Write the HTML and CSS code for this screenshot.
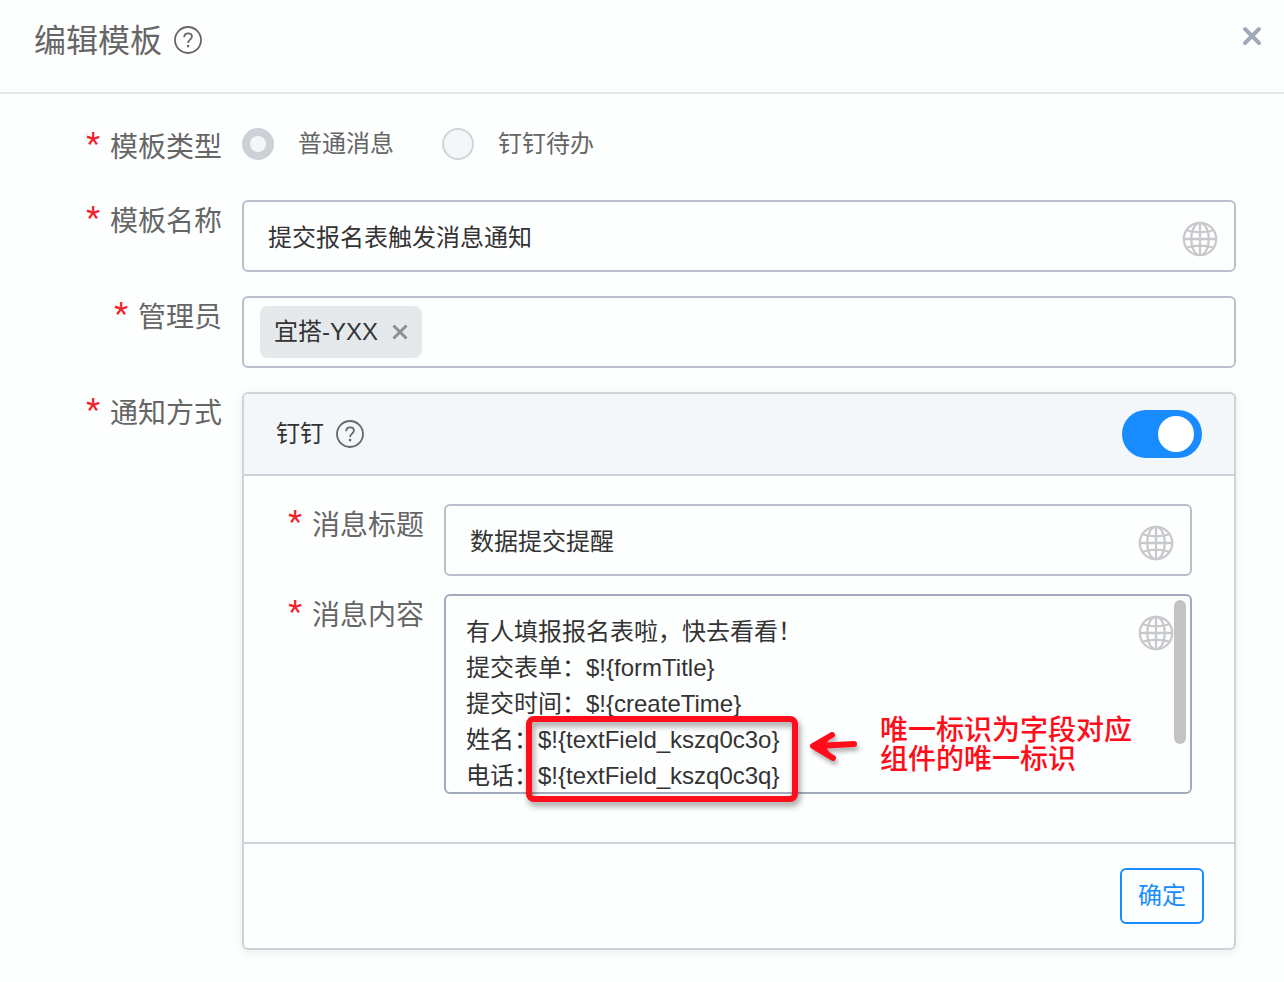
FILE: index.html
```html
<!DOCTYPE html>
<html lang="zh-CN">
<head>
    <meta charset="UTF-8">
    <meta name="viewport" content="width=device-width, initial-scale=1.0">
    <title>编辑模板</title>
    <link rel="stylesheet" href="styles.css">
</head>
<body>
    <!-- 公共图标 -->
    <svg class="sprite" aria-hidden="true">
        <symbol id="icon-help" viewBox="0 0 28 28">
            <circle cx="14" cy="14" r="13" fill="none" stroke="currentColor" stroke-width="1.8"/>
            <path d="M10.2 11.2c0-2.3 1.6-3.8 3.9-3.8 2.2 0 3.8 1.3 3.8 3.3 0 2.9-3.8 3.1-3.8 6.3" fill="none" stroke="currentColor" stroke-width="1.8"/>
            <circle cx="14.1" cy="20.1" r="1.3" fill="currentColor"/>
        </symbol>
        <symbol id="icon-globe" viewBox="0 0 36 36">
            <g fill="none" stroke="currentColor" stroke-width="2.3">
                <circle cx="18" cy="18" r="16.2"/>
                <ellipse cx="18" cy="18" rx="8.8" ry="16.2"/>
                <path d="M18 2v32M2 18h32M5 9.5c8 2.2 18 2.2 26 0M5 26.5c8-2.2 18-2.2 26 0"/>
            </g>
        </symbol>
    </svg>

    <header class="dialog-header">
        <h1>编辑模板</h1>
        <svg class="icon-help"><use href="#icon-help"/></svg>
        <button type="button" class="close" aria-label="关闭">
            <svg viewBox="0 0 20 20"><path d="M3 3l14 14M17 3L3 17"/></svg>
        </button>
    </header>

    <form class="form">
        <!-- 模板类型 -->
        <div class="row row-type">
            <span class="label" id="type-label">模板类型</span>
            <div class="radios" role="radiogroup" aria-labelledby="type-label">
                <label class="radio"><input type="radio" name="type" checked disabled>普通消息</label>
                <label class="radio"><input type="radio" name="type" disabled>钉钉待办</label>
            </div>
        </div>

        <!-- 模板名称 -->
        <div class="row">
            <label class="label" for="name">模板名称</label>
            <div class="field">
                <input type="text" id="name" value="提交报名表触发消息通知">
                <svg class="icon-globe"><use href="#icon-globe"/></svg>
            </div>
        </div>

        <!-- 管理员 -->
        <div class="row">
            <span class="label">管理员</span>
            <div class="field tags">
                <span class="tag">宜搭-YXX
                    <button type="button" class="tag-close" aria-label="移除">
                        <svg viewBox="0 0 16 16"><path d="M1.5 1.5l13 13M14.5 1.5l-13 13"/></svg>
                    </button>
                </span>
            </div>
        </div>

        <!-- 通知方式 -->
        <div class="row">
            <span class="label">通知方式</span>
            <section class="card">
                <div class="card-header">
                    <label for="ding">钉钉</label>
                    <svg class="icon-help"><use href="#icon-help"/></svg>
                    <input type="checkbox" id="ding" class="switch" role="switch" checked>
                </div>

                <div class="card-body">
                    <div class="row">
                        <label class="label" for="msg-title">消息标题</label>
                        <div class="field">
                            <input type="text" id="msg-title" value="数据提交提醒">
                            <svg class="icon-globe"><use href="#icon-globe"/></svg>
                        </div>
                    </div>
                    <div class="row">
                        <label class="label" for="msg-content">消息内容</label>
                        <div class="field">
                            <textarea id="msg-content">有人填报报名表啦，快去看看！
提交表单：$!{formTitle}
提交时间：$!{createTime}
姓名：$!{textField_kszq0c3o}
电话：$!{textField_kszq0c3q}</textarea>
                            <svg class="icon-globe"><use href="#icon-globe"/></svg>
                            <span class="scroll-thumb"></span>

                            <!-- 标注 -->
                            <div class="mark-box"></div>
                            <div class="mark-note">
                                <svg class="arrow" viewBox="0 0 52 36"><path class="arrow-line" d="M46 17L8 19M24 8L5 19l20 12"/><path class="arrow-head" d="M4 19L24 8L17 18.5L25 31z"/></svg>
                                <p>唯一标识为字段对应<br>组件的唯一标识</p>
                            </div>
                        </div>
                    </div>
                </div>

                <div class="card-footer">
                    <button type="button" class="btn">确定</button>
                </div>
            </section>
        </div>
    </form>
</body>
</html>
```
FILE: styles.css
```css
* {
    box-sizing: border-box;
}

body {
    margin: 0;
    background-color: #fdfefe;
    color: #333;
    font-family: "Liberation Sans", "Noto Sans CJK SC", sans-serif;
    font-size: 24px;
    line-height: 36px;
}

input,
textarea,
button {
    font: inherit;
    color: inherit;
}

button {
    padding: 0;
    border: 0;
    background: none;
    cursor: pointer;
}

.sprite {
    display: none;
}

/* 图标 */
.icon-help {
    width: 28px;
    height: 28px;
    margin-left: 12px;
    color: #666;
}

.icon-globe {
    position: absolute;
    top: 21px;
    right: 18px;
    width: 36px;
    height: 36px;
    color: #c8c9cc;
}

/* 标题栏 */
.dialog-header {
    display: flex;
    align-items: center;
    height: 94px;
    padding: 0 22px 12px 34px;
    border-bottom: 2px solid #e4e8eb;
}

h1 {
    margin: 0;
    padding-top: 2px;
    color: #666;
    font-size: 32px;
    font-weight: 400;
    line-height: 48px;
}

.close {
    margin: 0 0 8px auto;
}

.close svg {
    display: block;
    width: 20px;
    fill: none;
    stroke: #a2a9b8;
    stroke-width: 4;
    stroke-linecap: round;
}

/* 表单 */
.form {
    display: flex;
    flex-direction: column;
    gap: 24px;
    padding: 32px 48px 32px 0;
}

.row {
    display: flex;
    gap: 20px;
}

.row-type {
    height: 50px;
}

.label {
    flex: 0 0 222px;
    color: #666;
    font-size: 28px;
    line-height: 44px;
    text-align: right;
}

.label::before {
    content: "*";
    margin-right: 10px;
    color: #f5222d;
    font-family: Roboto, sans-serif;
    font-size: 32px;
    line-height: 1;
    vertical-align: 3px;
}

.radios {
    display: flex;
    align-items: center;
    gap: 48px;
    height: 36px;
    color: #666;
}

.radio {
    display: flex;
    align-items: center;
    gap: 24px;
}

.radio input {
    appearance: none;
    width: 32px;
    height: 32px;
    margin: 0;
    border: 2px solid #d0d4da;
    border-radius: 50%;
    background-color: #f4f7f9;
}

.radio input:checked {
    border: 8px solid #ccd1d8;
}

.field {
    position: relative;
    flex: 1;
    min-width: 0;
}

.field input,
.field textarea,
.tags {
    display: block;
    width: 100%;
    height: 72px;
    border: 2px solid #b9bfcb;
    border-radius: 6px;
    background-color: transparent;
    outline: 0;
}

.field input {
    padding: 0 64px 2px 24px;
}

.field textarea {
    height: 200px;
    padding: 18px 64px 0 20px;
    border-color: #a2aabb;
    resize: none;
    overflow: hidden;
}

.scroll-thumb {
    position: absolute;
    top: 6px;
    right: 6px;
    width: 12px;
    height: 144px;
    border-radius: 6px;
    background-color: #c4c4c6;
}

.tags {
    display: flex;
    align-items: center;
    padding: 0 16px;
}

.tag {
    display: flex;
    align-items: center;
    gap: 14px;
    height: 52px;
    padding: 0 14px;
    border-radius: 8px;
    background-color: #e5e9ec;
}

.tag-close svg {
    display: block;
    width: 16px;
    fill: none;
    stroke: #8c8f91;
    stroke-width: 3;
}

/* 通知卡片 */
.card {
    flex: 1;
    min-width: 0;
    border: 2px solid #ced3d9;
    border-radius: 6px;
    box-shadow: 0 2px 8px rgba(0, 0, 0, 0.08);
}

.card-header {
    display: flex;
    align-items: center;
    height: 82px;
    padding: 0 32px;
    border-bottom: 2px solid #ced3d9;
    border-radius: 4px 4px 0 0;
    background-color: #f4f7f9;
}

.switch {
    appearance: none;
    width: 80px;
    height: 48px;
    margin: 0 0 0 auto;
    padding: 6px 8px;
    border-radius: 24px;
    background-color: #c4c6cf;
}

.switch::before {
    content: "";
    display: block;
    width: 36px;
    height: 36px;
    border-radius: 50%;
    background-color: #fff;
}

.switch:checked {
    background-color: #188cff;
}

.switch:checked::before {
    margin-left: auto;
}

.card-body {
    display: flex;
    flex-direction: column;
    gap: 18px;
    padding: 28px 42px 48px 0;
}

.card-body .label {
    flex-basis: 180px;
}

.card-footer {
    display: flex;
    justify-content: flex-end;
    padding: 24px 30px;
    border-top: 2px solid #ced3d9;
}

.btn {
    width: 84px;
    height: 56px;
    border: 2px solid #188cff;
    border-radius: 6px;
    color: #188cff;
}

/* 红色标注 */
.mark-box {
    position: absolute;
    top: 122px;
    left: 82px;
    width: 272px;
    height: 86px;
    border: 6px solid #ff0d1b;
    border-radius: 8px;
    filter: drop-shadow(2px 4px 3px rgba(0, 0, 0, 0.4));
}

.mark-note {
    position: absolute;
    top: 122px;
    left: 364px;
    display: flex;
    align-items: center;
    gap: 20px;
    color: #ff0d1b;
    font-size: 28px;
    line-height: 29px;
    white-space: nowrap;
}

.mark-note p {
    margin: 0;
    font-weight: 500;
}

.arrow {
    width: 52px;
    height: 36px;
    stroke-linecap: round;
    stroke-linejoin: round;
    filter: drop-shadow(2px 4px 2px rgba(0, 0, 0, 0.3));
}

.arrow-line {
    fill: none;
    stroke: #ff0d1b;
    stroke-width: 6;
}

.arrow-head {
    fill: #ff0d1b;
}
```
